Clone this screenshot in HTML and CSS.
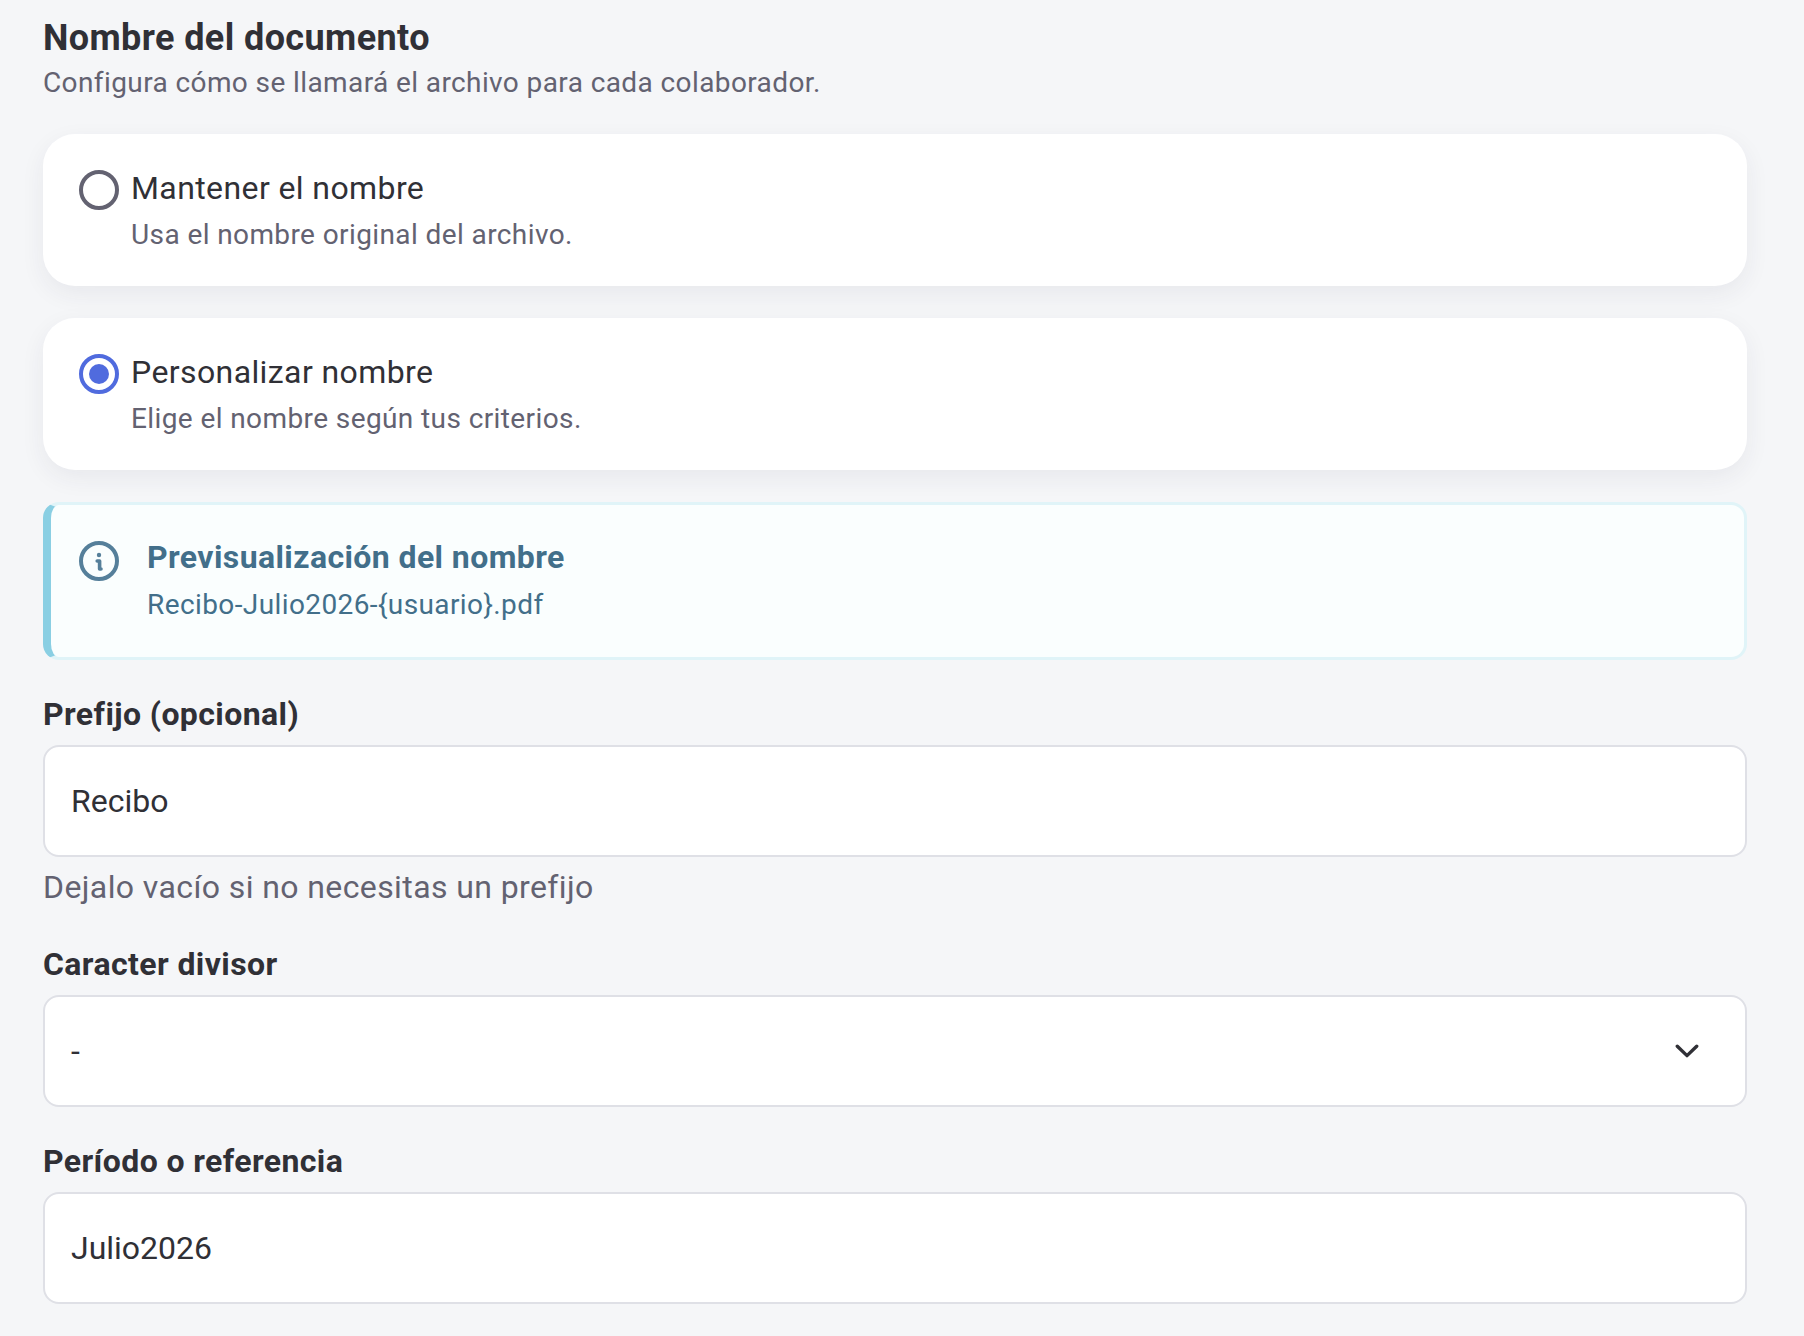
FILE: index.html
```
<!DOCTYPE html>
<html lang="es">
<head>
<meta charset="utf-8">
<title>Nombre del documento</title>
<link rel="stylesheet" href="styles.css">
</head>
<body>
<main class="page">
  <header class="header">
    <h1 class="title">Nombre del documento</h1>
    <p class="subtitle">Configura cómo se llamará el archivo para cada colaborador.</p>
  </header>

  <div class="options">
    <div class="option">
      <span class="radio"></span>
      <div>
        <div class="option-title">Mantener el nombre</div>
        <div class="option-text">Usa el nombre original del archivo.</div>
      </div>
    </div>
    <div class="option">
      <span class="radio radio-checked"></span>
      <div>
        <div class="option-title">Personalizar nombre</div>
        <div class="option-text">Elige el nombre según tus criterios.</div>
      </div>
    </div>
  </div>

  <section class="info">
    <svg class="info-icon" viewBox="0 0 40 40" fill="none" stroke="currentColor" stroke-linecap="round" stroke-linejoin="round">
      <circle cx="20" cy="20" r="18" stroke-width="4"/>
      <circle cx="20" cy="14" r="2.2" fill="currentColor" stroke="none"/>
      <path d="M18.2 20H20.6V28H22" stroke-width="3.6"/>
    </svg>
    <div>
      <div class="info-title">Previsualización del nombre</div>
      <div class="info-text">Recibo-Julio2026-{usuario}.pdf</div>
    </div>
  </section>

  <div class="field">
    <div class="label">Prefijo (opcional)</div>
    <div class="control">Recibo</div>
    <div class="help">Dejalo vacío si no necesitas un prefijo</div>
  </div>
  <div class="field">
    <div class="label">Caracter divisor</div>
    <div class="control">
      <span>-</span>
      <svg class="chevron" viewBox="0 0 24 16" fill="none" stroke="currentColor" stroke-width="3.4" stroke-linecap="round" stroke-linejoin="round">
        <path d="M2.3 3.2L12 12.6L21.7 3.2"/>
      </svg>
    </div>
  </div>
  <div class="field">
    <div class="label">Período o referencia</div>
    <div class="control">Julio2026</div>
  </div>
</main>
</body>
</html>
```
FILE: styles.css
```
* { box-sizing: border-box; }

body {
  margin: 0;
  background: #f5f6f8;
  color: #303036;
  font-family: Roboto, sans-serif;
  font-size: 32px;
  line-height: 40px;
  letter-spacing: 0.4px;
}

.page {
  width: 1804px;
  height: 1336px;
  padding: 16px 57px 0 43px;
  overflow: hidden;
}

.title {
  margin: 0;
  font-size: 36px;
  font-weight: 700;
  line-height: 44px;
}

.subtitle {
  margin: 1px 0 0;
  font-size: 28px;
  line-height: 44px;
  color: #636271;
}

.options {
  display: flex;
  flex-direction: column;
  gap: 32px;
  margin: 29px 0 32px;
}

.option {
  display: flex;
  gap: 12px;
  height: 152px;
  padding: 34px 36px;
  border-radius: 32px;
  background: #fff;
  box-shadow: 0 8px 24px rgba(41, 41, 80, 0.065);
}

.radio {
  display: flex;
  align-items: center;
  justify-content: center;
  flex: none;
  width: 40px;
  height: 40px;
  margin-top: 2px;
  border: 4px solid #636271;
  border-radius: 50%;
}

.radio-checked { border-color: #506bde; }

.radio-checked::before {
  content: "";
  width: 20px;
  height: 20px;
  border-radius: 50%;
  background: #506bde;
}

.option-text {
  margin-top: 7px;
  font-size: 28px;
  color: #636271;
}

.info {
  display: flex;
  gap: 28px;
  height: 158px;
  margin-bottom: 34px;
  padding: 32px 28px;
  border: 3px solid #e0f4f8;
  border-left: 8px solid #8acfe3;
  border-radius: 16px;
  background: #fafefe;
  color: #426f8a;
}

.info-icon {
  flex: none;
  width: 40px;
  height: 40px;
  margin-top: 4px;
  color: #557f9a;
}

.info-title { font-weight: 700; }

.info-text {
  margin-top: 8px;
  font-size: 28px;
}

.field { margin-bottom: 34px; }

.label {
  margin-bottom: 11px;
  font-weight: 700;
}

.control {
  display: flex;
  align-items: center;
  justify-content: space-between;
  height: 112px;
  padding: 0 46px 0 26px;
  border: 2px solid #dfe0e6;
  border-radius: 16px;
  background: #fff;
  letter-spacing: 0;
}

.chevron {
  width: 24px;
  height: 16px;
}

.help {
  margin-top: 10px;
  padding-bottom: 3px;
  color: #636271;
}
```
